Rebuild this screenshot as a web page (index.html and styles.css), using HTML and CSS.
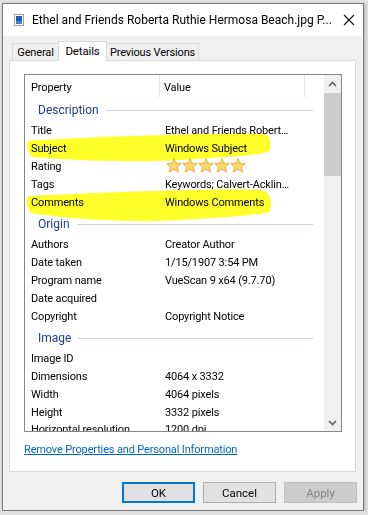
FILE: index.html
```html
<!DOCTYPE html>
<html lang="en">
<head>
    <meta charset="UTF-8">
    <title>Ethel and Friends Roberta Ruthie Hermosa Beach.jpg Properties</title>
    <link rel="stylesheet" href="styles.css">
</head>
<body>
    <div class="window">
        <div class="titlebar">
            <svg class="file-icon" width="10" height="12" viewBox="0 0 10 12">
                <rect x="0.5" y="0.5" width="9" height="11" fill="#fff" stroke="#a0a0a0"/>
                <rect x="2" y="2" width="6" height="8" fill="#1d5bb0"/>
                <rect x="2" y="7" width="6" height="3" fill="#3b7fd0"/>
            </svg>
            <span class="title">Ethel and Friends Roberta Ruthie Hermosa Beach.jpg P...</span>
            <svg class="close" width="12" height="12" viewBox="0 0 12 12">
                <path d="M1 1 L11 11 M11 1 L1 11" stroke="#111" stroke-width="1.1"/>
            </svg>
        </div>

        <div class="content">
            <div class="tabs">
                <div class="tab general">General</div>
                <div class="tab active">Details</div>
                <div class="tab versions">Previous Versions</div>
            </div>

            <div class="panel">
                <div class="list">
                    <svg class="marker" width="299" height="356" viewBox="0 0 299 356">
                        <path d="M3,66 C60,62 180,58 238,59 C246,59 247,70 244,76 C240,80 200,82 155,85 C110,88 40,85 8,82 C2,80 1,68 3,66 Z"/>
                        <path d="M3,121 C70,118 180,113 236,115 C246,116 248,130 244,137 C230,141 180,144 135,146 C80,147 30,142 6,138 C1,133 1,124 3,121 Z"/>
                    </svg>
                    <div class="list-body">
                        <div class="row head">
                            <div class="prop">Property</div>
                            <div class="val">Value</div>
                        </div>

                        <div class="group"><span>Description</span><i></i></div>
                        <div class="row"><div class="prop">Title</div><div class="val">Ethel and Friends Robert…</div></div>
                        <div class="row"><div class="prop">Subject</div><div class="val">Windows Subject</div></div>
                        <div class="row"><div class="prop">Rating</div>
                            <div class="val stars">
                                <svg width="16" height="16" viewBox="0 0 16 16"><path id="star" d="M8,0.6 L9.9,5.2 L15.2,5.6 L11.2,8.9 L12.5,14.2 L8,11.3 L3.5,14.2 L4.8,8.9 L0.8,5.6 L6.1,5.2 Z"/></svg>
                                <svg width="16" height="16" viewBox="0 0 16 16"><use href="#star"/></svg>
                                <svg width="16" height="16" viewBox="0 0 16 16"><use href="#star"/></svg>
                                <svg width="16" height="16" viewBox="0 0 16 16"><use href="#star"/></svg>
                                <svg width="16" height="16" viewBox="0 0 16 16"><use href="#star"/></svg>
                            </div>
                        </div>
                        <div class="row"><div class="prop">Tags</div><div class="val">Keywords; Calvert-Acklin…</div></div>
                        <div class="row"><div class="prop">Comments</div><div class="val">Windows Comments</div></div>

                        <div class="group"><span>Origin</span><i></i></div>
                        <div class="row"><div class="prop">Authors</div><div class="val">Creator Author</div></div>
                        <div class="row"><div class="prop">Date taken</div><div class="val">1/15/1907 3:54 PM</div></div>
                        <div class="row"><div class="prop">Program name</div><div class="val">VueScan 9 x64 (9.7.70)</div></div>
                        <div class="row"><div class="prop">Date acquired</div><div class="val"></div></div>
                        <div class="row"><div class="prop">Copyright</div><div class="val">Copyright Notice</div></div>

                        <div class="group"><span>Image</span><i></i></div>
                        <div class="row"><div class="prop">Image ID</div><div class="val"></div></div>
                        <div class="row"><div class="prop">Dimensions</div><div class="val">4064 x 3332</div></div>
                        <div class="row"><div class="prop">Width</div><div class="val">4064 pixels</div></div>
                        <div class="row"><div class="prop">Height</div><div class="val">3332 pixels</div></div>
                        <div class="row last"><div class="prop">Horizontal resolution</div><div class="val">1200 dpi</div></div>
                    </div>

                    <div class="scrollbar">
                        <div class="arrow">
                            <svg width="9" height="6" viewBox="0 0 9 6"><path d="M1 5 L4.5 1.5 L8 5" fill="none" stroke="#606060" stroke-width="1.6"/></svg>
                        </div>
                        <div class="thumb"></div>
                        <div class="track"></div>
                        <div class="arrow">
                            <svg width="9" height="6" viewBox="0 0 9 6"><path d="M1 1 L4.5 4.5 L8 1" fill="none" stroke="#606060" stroke-width="1.6"/></svg>
                        </div>
                    </div>
                </div>

                <a class="remove-link" href="#">Remove Properties and Personal Information</a>
            </div>

            <div class="actions">
                <button class="btn default">OK</button>
                <button class="btn">Cancel</button>
                <button class="btn" disabled>Apply</button>
            </div>
        </div>
    </div>
</body>
</html>
```

FILE: styles.css
```css
body {
    margin: 0;
    background: #e2e2e2;
    font-family: Roboto, "Noto Sans", sans-serif;
    font-size: 11px;
    letter-spacing: -0.15px;
    color: #000;
}
.window {
    margin: 3px 0 0 2px;
    width: 360px;
    height: 506px;
    border: 1px solid #7a7a7a;
    background: #f0f0f0;
    box-shadow: 1px 1px 3px rgba(0, 0, 0, 0.25);
}
.titlebar {
    height: 32px;
    background: #fff;
    display: flex;
    align-items: center;
    padding: 0 8px 0 11px;
}
.file-icon {
    flex: none;
}
.title {
    margin-left: 8px;
    font-size: 12px;
    letter-spacing: 0;
    flex: 1;
    min-width: 0;
    overflow: hidden;
    white-space: nowrap;
}
.close {
    flex: none;
    margin-left: 8px;
}
.content {
    padding: 5px 7px 0 6px;
}
.tabs {
    display: flex;
    align-items: flex-start;
    padding-left: 3px;
    height: 20px;
    position: relative;
    z-index: 1;
}
.tab {
    height: 17px;
    margin-top: 2px;
    box-sizing: border-box;
    border: 1px solid #d9d9d9;
    border-bottom: none;
    background: #f0f0f0;
    line-height: 17px;
    text-align: center;
}
.tab.general {
    width: 47px;
}
.tab.versions {
    width: 93px;
}
.tab.active {
    height: 20px;
    margin-top: 0;
    margin-left: -1px;
    margin-right: -1px;
    width: 49px;
    background: #fff;
    line-height: 19px;
    font-size: 11.5px;
    position: relative;
    z-index: 1;
}
.panel {
    margin-top: -1px;
    height: 412px;
    box-sizing: border-box;
    background: #fff;
    border: 1px solid #d9d9d9;
    padding: 13px 13px 0 14px;
}
.list {
    height: 358px;
    box-sizing: border-box;
    border: 1px solid #828790;
    display: flex;
    position: relative;
    overflow: hidden;
}
.marker {
    position: absolute;
    left: 0;
    top: 0;
    fill: #ffff2a;
    mix-blend-mode: multiply;
}
.list-body {
    flex: 1;
    overflow: hidden;
}
.row {
    display: flex;
    height: 18px;
    align-items: center;
    white-space: nowrap;
}
.row.last {
    height: 8px;
    align-items: flex-start;
    line-height: 17px;
}
.prop {
    width: 135px;
    padding-left: 6px;
    box-sizing: border-box;
    flex: none;
}
.val {
    width: 145px;
    padding-left: 5px;
    box-sizing: border-box;
    flex: none;
}
.row.head {
    height: 22px;
    align-items: stretch;
}
.row.head .prop,
.row.head .val {
    border-right: 1px solid #e5e5e5;
    padding-top: 6px;
}
.row.head .val {
    padding-left: 4px;
}
.stars {
    display: flex;
    gap: 0;
    padding-left: 6px;
}
.stars svg {
    fill: #fcd86a;
    stroke: #eca53a;
    stroke-width: 0.9;
    stroke-linejoin: round;
}
.group {
    display: flex;
    align-items: center;
    height: 24px;
    padding: 2px 11px 0 13px;
    box-sizing: border-box;
    color: #1e3c8e;
    font-size: 12px;
    letter-spacing: 0;
}
.group i {
    flex: 1;
    height: 1px;
    margin-left: 7px;
    background: #c9d3e3;
}
.scrollbar {
    width: 17px;
    flex: none;
    background: #f0f0f0;
    display: flex;
    flex-direction: column;
}
.arrow {
    height: 17px;
    display: flex;
    align-items: center;
    justify-content: center;
}
.thumb {
    margin-top: 1px;
    height: 83px;
    background: #cdcdcd;
}
.track {
    flex: 1;
}
.remove-link {
    display: inline-block;
    margin-top: 10px;
    line-height: 16px;
    font-size: 11px;
    color: #0066cc;
    text-decoration: underline;
}
.actions {
    display: flex;
    justify-content: flex-end;
    gap: 8px;
    padding-top: 10px;
    margin-right: -1px;
}
.btn {
    width: 73px;
    height: 21px;
    box-sizing: border-box;
    border: 1px solid #adadad;
    background: #e1e1e1;
    font-family: Roboto, "Noto Sans", sans-serif;
    font-size: 11.5px;
    color: #000;
    padding: 0;
}
.btn.default {
    border: 2px solid #0078d7;
}
.btn:disabled {
    background: #cccccc;
    border-color: #bfbfbf;
    color: #838383;
}
```
